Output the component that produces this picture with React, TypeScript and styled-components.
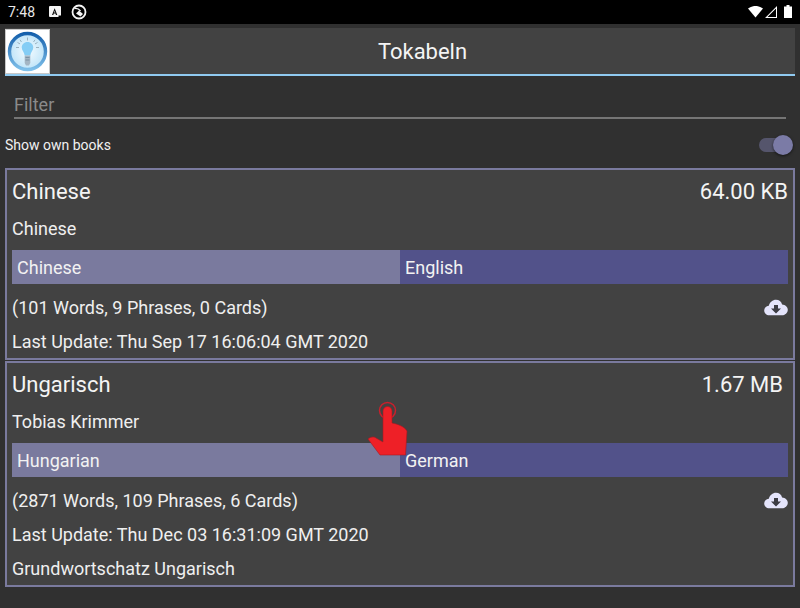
import React from "react";
import styled, { createGlobalStyle } from "styled-components";

const Global = createGlobalStyle`
  html, body { margin: 0; padding: 0; background: #303030; }
  body { font-family: Roboto, "Noto Sans", sans-serif; color: #fff; }
  * { box-sizing: border-box; }
`;

const Page = styled.div`
  width: 800px;
  height: 608px;
  overflow: hidden;
  position: relative;
  background: #303030;
`;

const StatusBar = styled.div`
  height: 24px;
  background: #000;
  display: flex;
  align-items: center;
  padding: 0 6px 0 8px;
`;
const Clock = styled.span`
  font-size: 14px;
  color: #e8e8e8;
  width: 41px;
`;
const StatusIcons = styled.div`
  display: flex;
  align-items: center;
  gap: 10px;
`;
const Spacer = styled.div`
  flex: 1;
`;

const Toolbar = styled.div`
  margin: 4px 5px 0;
  height: 48px;
  background: #424242;
  border-bottom: 2px solid #90caf0;
  display: flex;
  align-items: flex-start;
`;
const Logo = styled.div`
  width: 45px;
  height: 45px;
  margin-top: 1px;
  background: #fff;
  border: 1px solid #c8c8c8;
  display: flex;
  align-items: center;
  justify-content: center;
`;
const ToolbarTitle = styled.div`
  flex: 1;
  height: 46px;
  line-height: 48px;
  text-align: center;
  font-size: 22px;
  color: #f4f4f4;
`;

const FilterWrap = styled.div`
  margin: 16px 14px 0;
  height: 27px;
  border-bottom: 2px solid #757575;
  font-size: 18px;
  line-height: 25px;
  color: #8a8a8a;
`;

const OwnRow = styled.div`
  height: 20px;
  margin: 16px 8px 0 5px;
  display: flex;
  align-items: center;
  justify-content: space-between;
  font-size: 14px;
  color: #f0f0f0;
`;
const Switch = styled.div`
  width: 33px;
  height: 14px;
  border-radius: 7px;
  background: #55556c;
  position: relative;
`;
const Knob = styled.div`
  position: absolute;
  right: -1px;
  top: -3px;
  width: 20px;
  height: 20px;
  border-radius: 50%;
  background: #7b7ba6;
  box-shadow: 0 1px 3px rgba(0, 0, 0, 0.6);
`;

const List = styled.div`
  margin: 13px 5px 0;
  display: flex;
  flex-direction: column;
  gap: 1px;
`;
const Card = styled.div`
  background: #424242;
  border: 2px solid #7a7a9e;
  padding: 0 5px;
`;
const Row = styled.div<{ $h: number }>`
  height: ${(p) => p.$h}px;
  display: flex;
  align-items: center;
  justify-content: space-between;
`;
const Title = styled.span`
  font-size: 22px;
  color: #f4f4f4;
`;
const Size = styled.span<{ $pad: number }>`
  font-size: 22px;
  color: #f4f4f4;
  padding-right: ${(p) => p.$pad}px;
`;
const Line = styled.span`
  font-size: 18px;
  color: #efefef;
`;
const FootLine = styled(Line)`
  padding-top: 6px;
`;
const Langs = styled.div`
  height: 34px;
  display: flex;
`;
const Lang = styled.div<{ $second?: boolean }>`
  flex: 1;
  background: ${(p) => (p.$second ? "#52528a" : "#7a7a9e")};
  font-size: 18px;
  line-height: 36px;
  padding-left: 5px;
  color: #f2f2f2;
`;
const CloudBox = styled.span`
  display: flex;
`;

const Hand = styled.svg`
  position: absolute;
  left: 366px;
  top: 400px;
`;

const Cloud = () => (
  <CloudBox>
    <svg width="24" height="17" viewBox="0 0 24 16">
      <path
        fill="#e4e4fb"
        d="M12 0.200c3 0 5.500 2 6.100 4.800 3.200.2 5.700 2.500 5.700 5.200 0 3-2.700 5.600-6 5.600H5.200C2.400 15.800 0.200 13.600 0.200 11c0-2.500 2-4.500 4.600-4.800C5.800 2.700 8.600 0.200 12 0.200z"
      />
      <path fill="#3c3c44" d="M10 5.500h4V9h3l-5 5-5-5h3z" />
    </svg>
  </CloudBox>
);

const BookCard = ({
  title,
  size,
  pad,
  author,
  a,
  b,
  counts,
  updated,
  extra,
}: {
  title: string;
  size: string;
  pad: number;
  author: string;
  a: string;
  b: string;
  counts: string;
  updated: string;
  extra?: string;
}) => (
  <Card>
    <Row $h={42}>
      <Title>{title}</Title>
      <Size $pad={pad}>{size}</Size>
    </Row>
    <Row $h={33}>
      <Line>{author}</Line>
    </Row>
    <Row $h={5} />
    <Langs>
      <Lang>{a}</Lang>
      <Lang $second>{b}</Lang>
    </Langs>
    <Row $h={46}>
      <Line>{counts}</Line>
      <Cloud />
    </Row>
    <Row $h={23}>
      <Line>{updated}</Line>
    </Row>
    {extra ? (
      <Row $h={39}>
        <FootLine>{extra}</FootLine>
      </Row>
    ) : (
      <Row $h={5} />
    )}
  </Card>
);

export default function App() {
  return (
    <Page>
      <Global />
      <StatusBar>
        <Clock>7:48</Clock>
        <StatusIcons>
          <svg width="12" height="12" viewBox="0 0 12 12">
            <path d="M1 0h10a1 1 0 0 1 1 1v8.500H9.500V11H1a1 1 0 0 1-1-1V1a1 1 0 0 1 1-1z" fill="#f4f4f4" />
            <path d="M5.500 2.500L3 9h1.300l.5-1.400h1.600L7 9h1.300L5.800 2.500zM5.100 6.500l.6-1.800.6 1.800z" fill="#111" />
          </svg>
          <svg width="16" height="16" viewBox="0 0 16 16">
            <circle cx="8" cy="8" r="6.500" fill="none" stroke="#f4f4f4" strokeWidth="1.800" />
            <path d="M3.500 4.500C6 4 8 5 9.500 7" fill="none" stroke="#f4f4f4" strokeWidth="1.400" />
            <path d="M5 9.500L8 6.500l4 3.500-2.500 2.500z" fill="#f4f4f4" />
          </svg>
        </StatusIcons>
        <Spacer />
        <svg width="48" height="16" viewBox="0 0 48 16">
          <path d="M2 4.500C5 2.600 8 2 9.500 2s4.500.6 7.500 2.500L9.500 13.500z" fill="#fff" />
          <path d="M19 14L31 2v12z M21.500 13h8.500V4.600z" fillRule="evenodd" fill="#fff" />
          <path d="M38 2.500h2.500V1h3v1.500H46V14h-8z" fill="#fff" />
        </svg>
      </StatusBar>
      <Toolbar>
        <Logo>
          <svg width="41" height="41" viewBox="0 0 41 41">
            <defs>
              <radialGradient id="disc" cx="50%" cy="50%" r="50%">
                <stop offset="0%" stopColor="#f4fbff" />
                <stop offset="100%" stopColor="#bfe4f8" />
              </radialGradient>
              <linearGradient id="ring" x1="0" y1="0" x2="0" y2="1">
                <stop offset="0%" stopColor="#1560ac" />
                <stop offset="100%" stopColor="#7fc0ea" />
              </linearGradient>
            </defs>
            <circle cx="20.500" cy="20.500" r="18" fill="url(#disc)" stroke="url(#ring)" strokeWidth="3.400" />
            <path d="M20.500 11c-3.500 0-5.800 2.600-5.800 5.600 0 3 2.600 4.600 3 7.900h5.600c.4-3.300 3-4.900 3-7.900 0-3-2.300-5.600-5.800-5.600z" fill="#84cdf5" />
            <path d="M17.700 24.500h5.600v7.500l-1.300 2.500h-3l-1.300-2.500z" fill="#a4b6c4" />
            <path d="M18.500 26.500h4M18.500 29h4" stroke="#6a8296" strokeWidth="0.700" />
            <path
              d="M20.500 6.500v3M13 8.800l1.500 2.200M28 8.800l-1.500 2.200M9 16.500h3M29 16.500h3M10.500 11.500l2.500 1.400M30.500 11.500L28 12.900"
              stroke="#8aa2b0"
              strokeWidth="0.800"
            />
          </svg>
        </Logo>
        <ToolbarTitle>Tokabeln</ToolbarTitle>
      </Toolbar>
      <FilterWrap>Filter</FilterWrap>
      <OwnRow>
        Show own books
        <Switch>
          <Knob />
        </Switch>
      </OwnRow>
      <List>
        <BookCard
          title="Chinese"
          size="64.00 KB"
          pad={0}
          author="Chinese"
          a="Chinese"
          b="English"
          counts="(101 Words, 9 Phrases, 0 Cards)"
          updated="Last Update: Thu Sep 17 16:06:04 GMT 2020"
        />
        <BookCard
          title="Ungarisch"
          size="1.67 MB"
          pad={5}
          author="Tobias Krimmer"
          a="Hungarian"
          b="German"
          counts="(2871 Words, 109 Phrases, 6 Cards)"
          updated="Last Update: Thu Dec 03 16:31:09 GMT 2020"
          extra="Grundwortschatz Ungarisch"
        />
      </List>
      <Hand width="46" height="58" viewBox="0 0 46 58">
        <circle cx="21.500" cy="10.500" r="8" fill="none" stroke="#c9202c" strokeWidth="1.500" />
        <path
          d="M17 42V11a4.500 4.500 0 0 1 9 0v12c5 1 12 3 15 8l-1.500 24H14L2 39c2-2 6-3 8-1z"
          fill="#ee2027"
          stroke="#a81820"
          strokeWidth="0.600"
        />
      </Hand>
    </Page>
  );
}
